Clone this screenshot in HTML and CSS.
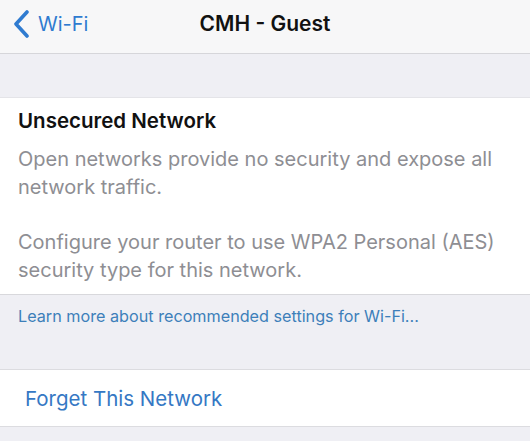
FILE: index.html
```html
<!DOCTYPE html>
<html lang="en">

<head>
    <meta charset="UTF-8">
    <title>CMH - Guest</title>
    <link rel="stylesheet" href="styles.css">
</head>

<body>
<div class="nav">
    <a class="back" href="#">
        <svg class="chev" width="20" height="28" viewBox="0 0 20 28">
            <path d="M15 2 L4 14 L15 26" fill="none" stroke="#2f7bd0" stroke-width="3.6" stroke-linecap="round" stroke-linejoin="round"/>
        </svg>
        <span>Wi-Fi</span>
    </a>
    <div class="title">CMH - Guest</div>
    <div></div>
</div>

<div class="gap-top"></div>

<div class="card">
    <div class="head">Unsecured Network</div>
    <p class="body-text">Open networks provide no security and expose all network traffic.</p>
    <p class="body-text">Configure your router to use WPA2 Personal (AES) security type for this network.</p>
</div>

<div class="footer">
    <a class="learn" href="#">Learn more about recommended settings for Wi-Fi...</a>
</div>

<div class="row">
    <a class="forget" href="#">Forget This Network</a>
</div>

<div class="bottom"></div>
</body>

</html>
```

FILE: styles.css
```css
body {
    margin: 0;
    background: #efeff4;
    font-family: Inter, "Liberation Sans", sans-serif;
    overflow: hidden;
}
a {
    text-decoration: none;
}
.nav {
    height: 54px;
    box-sizing: border-box;
    padding-bottom: 6px;
    background: #f7f7f8;
    border-bottom: 1px solid #d6d6da;
    display: grid;
    grid-template-columns: 1fr auto 1fr;
    align-items: center;
}
.back {
    display: flex;
    align-items: center;
    gap: 6px;
    padding-left: 12px;
    color: #2f7bd0;
    font-size: 20px;
}
.title {
    font-size: 21px;
    font-weight: 600;
    color: #111;
}
.gap-top {
    height: 43px;
}
.card {
    background: #fff;
    border-top: 1px solid #e4e4e8;
    border-bottom: 1px solid #d8d8dc;
    padding: 9px 18px 10px 18px;
}
.head {
    font-size: 20.5px;
    font-weight: 600;
    color: #111;
    line-height: 28px;
}
.body-text {
    margin: 10px 0 0 0;
    font-size: 20px;
    line-height: 28px;
    color: #8e8e93;
}
.body-text + .body-text {
    margin-top: 27px;
}
.footer {
    height: 74px;
    padding: 11px 18px 0 18px;
    box-sizing: border-box;
}
.learn {
    font-size: 16.2px;
    color: #3d7fba;
}
.row {
    background: #fff;
    border-top: 1px solid #dcdce0;
    border-bottom: 1px solid #dcdce0;
    height: 56px;
    display: flex;
    align-items: center;
    padding-left: 25px;
}
.forget {
    font-size: 20.5px;
    color: #3578c4;
}
.bottom {
    height: 20px;
}
```
